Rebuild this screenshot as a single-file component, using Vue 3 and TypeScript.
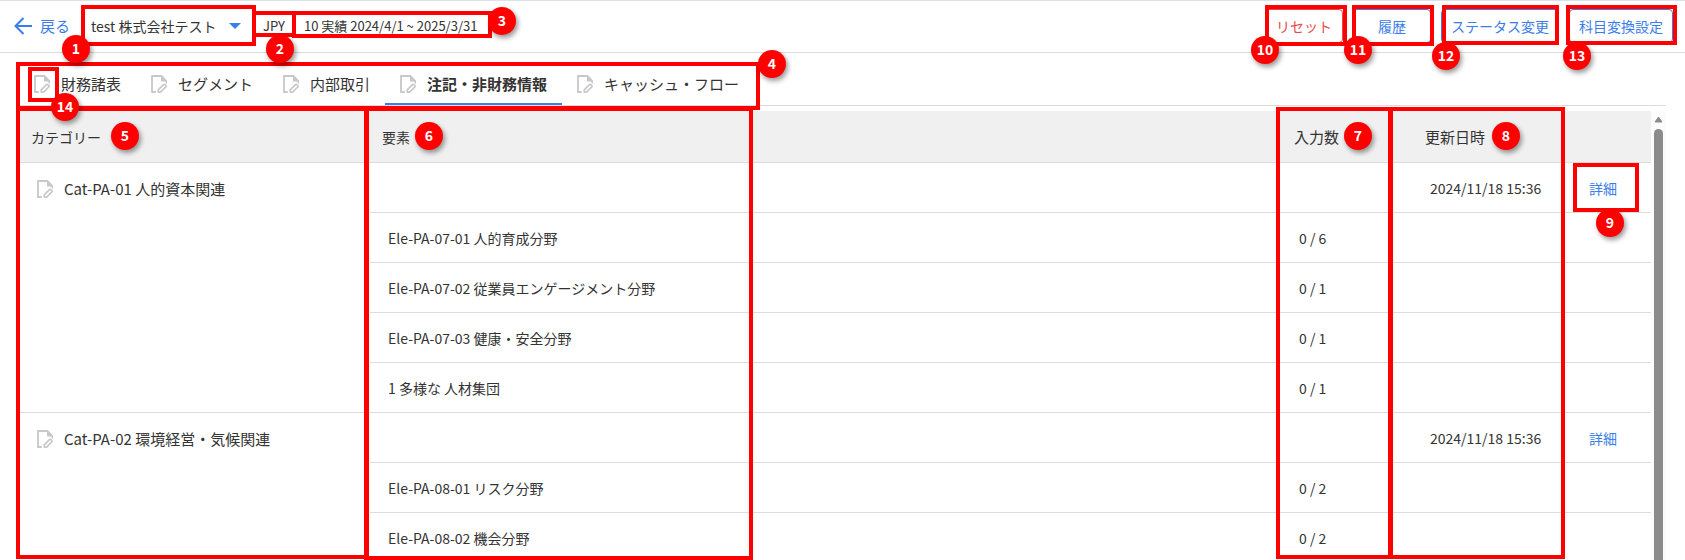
<script setup lang="ts">
import { ref } from 'vue'

interface ElementRow {
  name: string
  count: string
}
interface Category {
  name: string
  updated: string
  elements: ElementRow[]
}
interface Callout {
  no: number
  side: 'left' | 'right'
  // box: offset from the side, top, width, height
  box: [number, number, number, number]
  // badge: offset from the side, top
  badge: [number, number]
}

const company = ref('test')
const tabs = ['財務諸表', 'セグメント', '内部取引', '注記・非財務情報', 'キャッシュ・フロー']
const activeTab = ref(3)

const actions = [
  { label: 'リセット', danger: true },
  { label: '履歴', danger: false },
  { label: 'ステータス変更', danger: false },
  { label: '科目変換設定', danger: false },
]

const categories: Category[] = [
  {
    name: 'Cat-PA-01 人的資本関連',
    updated: '2024/11/18 15:36',
    elements: [
      { name: 'Ele-PA-07-01 人的育成分野', count: '0 / 6' },
      { name: 'Ele-PA-07-02 従業員エンゲージメント分野', count: '0 / 1' },
      { name: 'Ele-PA-07-03 健康・安全分野', count: '0 / 1' },
      { name: '1 多様な 人材集団', count: '0 / 1' },
    ],
  },
  {
    name: 'Cat-PA-02 環境経営・気候関連',
    updated: '2024/11/18 15:36',
    elements: [
      { name: 'Ele-PA-08-01 リスク分野', count: '0 / 2' },
      { name: 'Ele-PA-08-02 機会分野', count: '0 / 2' },
    ],
  },
]

const callouts: Callout[] = [
  { no: 1, side: 'left', box: [81, 5, 175, 41], badge: [62, 35] },
  { no: 2, side: 'left', box: [252, 11, 44, 26], badge: [266, 35] },
  { no: 3, side: 'left', box: [292, 11, 200, 27], badge: [488, 7] },
  { no: 4, side: 'left', box: [16, 62, 744, 48], badge: [758, 50] },
  { no: 5, side: 'left', box: [16, 107, 353, 452], badge: [111, 122] },
  { no: 6, side: 'left', box: [364, 107, 389, 453], badge: [415, 122] },
  { no: 7, side: 'right', box: [292, 107, 117, 452], badge: [313, 122] },
  { no: 8, side: 'right', box: [120, 107, 177, 452], badge: [165, 122] },
  { no: 9, side: 'right', box: [46, 163, 66, 49], badge: [61, 209] },
  { no: 10, side: 'right', box: [338, 5, 82, 41], badge: [406, 36] },
  { no: 11, side: 'right', box: [251, 5, 82, 41], badge: [313, 36] },
  { no: 12, side: 'right', box: [126, 5, 117, 40], badge: [225, 42] },
  { no: 13, side: 'right', box: [8, 5, 111, 40], badge: [94, 42] },
  { no: 14, side: 'left', box: [28, 67, 31, 35], badge: [51, 93] },
]

const boxStyle = (c: Callout) => ({
  [c.side]: c.box[0] + 'px',
  top: c.box[1] + 'px',
  width: c.box[2] + 'px',
  height: c.box[3] + 'px',
})
const badgeStyle = (c: Callout) => ({
  [c.side]: c.badge[0] + 'px',
  top: c.badge[1] + 'px',
})
</script>

<template>
  <div class="page">
    <svg class="defs" aria-hidden="true">
      <symbol id="doc-edit" viewBox="0 0 16 18">
        <path d="M4.8 17H1V1h9.5" fill="none" stroke="currentColor" stroke-width="1.8" />
        <path d="M10 .1h.8L16 5.6V9l-1.7-1.4V6.6H10z" fill="currentColor" />
        <path
          d="M7.2 17.1v-2.2l5.3-5.3a1 1 0 0 1 1.4 0l.9.9a1 1 0 0 1 0 1.4l-5.2 5.2z"
          fill="none"
          stroke="currentColor"
          stroke-width="1.6"
          stroke-linejoin="round"
        />
      </symbol>
    </svg>

    <header class="topbar">
      <a class="back" href="#">
        <svg class="back-icon" viewBox="0 0 18 18" aria-hidden="true">
          <path d="M9.5 1L1.5 9l8 8M1.5 9H18" fill="none" stroke="currentColor" stroke-width="2" />
        </svg>
        <span>戻る</span>
      </a>
      <div class="company">
        <select v-model="company" class="company-select" aria-label="会社">
          <option value="test">test 株式会社テスト</option>
        </select>
        <svg class="caret" viewBox="0 0 12 6" aria-hidden="true">
          <path d="M0 0h12L6 6z" fill="currentColor" />
        </svg>
      </div>
      <span class="currency">JPY</span>
      <span class="period">10 実績 2024/4/1 ~ 2025/3/31</span>
      <div class="actions">
        <button
          v-for="a in actions"
          :key="a.label"
          type="button"
          class="action"
          :class="{ danger: a.danger }"
        >
          {{ a.label }}
        </button>
      </div>
    </header>

    <nav class="tabs" role="tablist">
      <button
        v-for="(t, i) in tabs"
        :key="t"
        type="button"
        role="tab"
        class="tab"
        :class="{ active: i === activeTab }"
        :aria-selected="i === activeTab"
        @click="activeTab = i"
      >
        <svg class="doc" aria-hidden="true"><use href="#doc-edit" /></svg>
        <span>{{ t }}</span>
      </button>
    </nav>

    <main class="panel">
      <table class="grid">
        <colgroup>
          <col class="c-category" />
          <col />
          <col class="c-count" />
          <col class="c-date" />
          <col class="c-link" />
        </colgroup>
        <thead>
          <tr>
            <th class="small">カテゴリー</th>
            <th class="small">要素</th>
            <th>入力数</th>
            <th>更新日時</th>
            <th></th>
          </tr>
        </thead>
        <tbody v-for="c in categories" :key="c.name">
          <tr>
            <td class="category" :rowspan="c.elements.length + 1">
              <div class="category-name">
                <svg class="doc" aria-hidden="true"><use href="#doc-edit" /></svg>
                <span>{{ c.name }}</span>
              </div>
            </td>
            <td></td>
            <td></td>
            <td>{{ c.updated }}</td>
            <td><a class="detail" href="#">詳細</a></td>
          </tr>
          <tr v-for="e in c.elements" :key="e.name">
            <td>{{ e.name }}</td>
            <td>{{ e.count }}</td>
            <td></td>
            <td></td>
          </tr>
        </tbody>
      </table>
      <div class="scroll" aria-hidden="true">
        <svg class="scroll-up" viewBox="0 0 9 7">
          <path d="M4.5 1L8 6H1z" fill="currentColor" stroke="currentColor" stroke-linejoin="round" />
        </svg>
        <div class="thumb"></div>
      </div>
    </main>

    <div class="callouts">
      <div v-for="c in callouts" :key="'b' + c.no" class="box" :style="boxStyle(c)"></div>
      <div v-for="c in callouts" :key="'n' + c.no" class="badge" :style="badgeStyle(c)">
        {{ c.no }}
      </div>
    </div>
  </div>
</template>

<style>
body {
  margin: 0;
  background: #fff;
}
</style>

<style scoped>
.page {
  position: relative;
  display: flex;
  flex-direction: column;
  box-sizing: border-box;
  height: 100vh;
  overflow: hidden;
  border-top: 1px solid #dae1ec;
  color: #333;
  font-family: 'Noto Sans CJK JP', 'Noto Sans', sans-serif;
  font-size: 14px;
  line-height: 20px;
}
.defs {
  position: absolute;
  width: 0;
  height: 0;
}
button,
select {
  font: inherit;
  color: inherit;
  background: none;
  border: 0;
  margin: 0;
  padding: 0;
}
.topbar {
  flex: none;
  display: flex;
  align-items: center;
  box-sizing: border-box;
  height: 52px;
  padding: 0 12px 2px 14px;
  border-bottom: 1px solid #dcdcdc;
  white-space: nowrap;
}
.back {
  display: flex;
  align-items: center;
  gap: 8px;
  color: #3b7de9;
  text-decoration: none;
  font-size: 15px;
}
.back-icon {
  width: 18px;
  height: 18px;
}
.company {
  display: grid;
  align-items: center;
  margin-left: 21px;
}
.company-select {
  grid-area: 1 / 1;
  appearance: none;
  padding-right: 24px;
  height: 36px;
  font-size: 14px;
}
.caret {
  grid-area: 1 / 1;
  justify-self: end;
  width: 12px;
  height: 6px;
  color: #3b7de9;
  pointer-events: none;
}
.currency {
  margin-left: 22px;
  font-size: 13px;
}
.period {
  margin-left: 19px;
  font-size: 13px;
}
.actions {
  display: flex;
  gap: 10px;
  margin-left: auto;
}
.action {
  box-sizing: border-box;
  min-width: 78px;
  height: 34px;
  padding: 0 9px;
  border: 1px solid #3b7de9;
  border-radius: 4px;
  color: #3b7de9;
}
.action.danger {
  border-color: #e5484d;
  color: #e5484d;
}
.tabs {
  flex: none;
  display: flex;
  height: 52px;
  margin: 0 19px;
  border-bottom: 1px solid #dcdcdc;
}
.tab {
  display: flex;
  align-items: center;
  gap: 11px;
  box-sizing: border-box;
  height: 52px;
  padding: 12px 15px 0;
  border-bottom: 2px solid transparent;
  font-size: 15px;
}
.tab.active {
  border-bottom-color: #3b7de9;
  font-weight: 700;
}
.doc {
  flex: none;
  width: 16px;
  height: 18px;
  color: #c8c8c8;
}
.panel {
  flex: 1;
  min-height: 0;
  display: flex;
  align-items: stretch;
  overflow: hidden;
  margin: 5px 19px 0;
}
.grid {
  flex: 1;
  align-self: flex-start;
  min-width: 0;
  table-layout: fixed;
  border-collapse: separate;
  border-spacing: 0;
}
.c-category {
  width: 351px;
}
.c-count {
  width: 131px;
}
.c-date {
  width: 159px;
}
.c-link {
  width: 80px;
}
th,
td {
  box-sizing: border-box;
  height: 50px;
  border-bottom: 1px solid #dcdcdc;
  text-align: left;
  white-space: nowrap;
}
th {
  height: 52px;
  padding: 0 13px;
  background: #f0f0f0;
  font-size: 15px;
  font-weight: 400;
}
th.small {
  padding: 0 12px;
  font-size: 14px;
}
td {
  padding: 0 18px;
}
td.category {
  vertical-align: top;
}
.category-name {
  display: flex;
  align-items: center;
  gap: 11px;
  height: 52px;
  font-size: 15px;
}
.detail {
  color: #3b7de9;
  text-decoration: none;
}
.scroll {
  flex: none;
  display: flex;
  flex-direction: column;
  align-items: center;
  gap: 6px;
  width: 15px;
  padding-top: 5px;
  background: #fcfcfc;
  color: #8b8b8b;
}
.scroll-up {
  flex: none;
  width: 9px;
  height: 7px;
}
.thumb {
  flex: 1;
  width: 9px;
  border-radius: 5px 5px 0 0;
  background: #8b8b8b;
}
.callouts {
  position: absolute;
  inset: -1px 0 0;
  pointer-events: none;
}
.box {
  position: absolute;
  box-sizing: border-box;
  border: 4px solid #f00;
}
.badge {
  position: absolute;
  width: 28px;
  height: 28px;
  border-radius: 50%;
  background: #f00;
  box-shadow: 2px 3px 5px rgba(0, 0, 0, 0.4);
  color: #fff;
  font-size: 14px;
  font-weight: 700;
  line-height: 26px;
  text-align: center;
}
</style>
